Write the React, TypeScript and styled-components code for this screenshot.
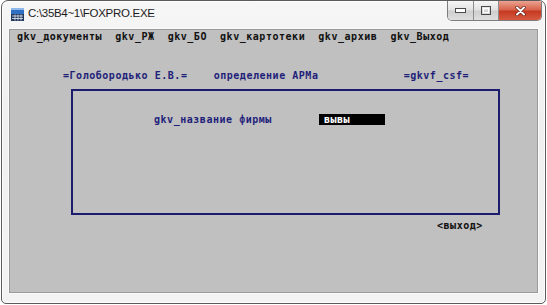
import { createGlobalStyle, styled } from "styled-components";

const GlobalStyle = createGlobalStyle`
  html, body {
    margin: 0;
    padding: 0;
    background: #ffffff;
  }
`;

const Window = styled.div`
  box-sizing: border-box;
  margin-left: 1px;
  width: 545px;
  height: 304px;
  border: 1px solid #5b5b5b;
  border-radius: 7px 7px 5px 5px;
  background: linear-gradient(180deg, #f6f6f6 0%, #efefef 40%, #f3f3f3 100%);
  box-shadow: inset 0 0 0 1px #fdfdfd;
  display: flex;
  flex-direction: column;
  overflow: hidden;
`;

const TitleBar = styled.div`
  height: 28px;
  display: flex;
  align-items: flex-start;
  flex-shrink: 0;
`;

const TitleIcon = styled.svg`
  margin: 7px 0 0 9px;
  flex-shrink: 0;
`;

const TitleText = styled.span`
  margin: 6px 0 0 4px;
  font-family: "Liberation Sans", Arial, sans-serif;
  font-size: 11.5px;
  letter-spacing: -0.3px;
  color: #1c1c1c;
  flex: 1;
`;

const CaptionGroup = styled.div`
  display: flex;
  margin-right: 3px;
  height: 19px;
  border: 1px solid #7d7d7d;
  border-top: none;
  border-radius: 0 0 5px 5px;
  overflow: hidden;
`;

const CaptionButton = styled.div<{ $w: number; $danger?: boolean }>`
  width: ${(p) => p.$w}px;
  display: flex;
  align-items: center;
  justify-content: center;
  background: ${(p) =>
    p.$danger
      ? "linear-gradient(180deg, #eba392 0%, #d8644c 45%, #c63a22 55%, #d65a40 100%)"
      : "linear-gradient(180deg, #f6f6f6 0%, #e2e2e2 45%, #cfcfcf 55%, #dedede 100%)"};
  & + & {
    border-left: 1px solid #8c8c8c;
  }
`;

const Client = styled.div`
  margin: 0 7px 10px 7px;
  flex: 1;
  border: 1px solid #9a9a9a;
  box-shadow: 0 0 0 1px #fafafa;
  background: #c0c0c0;
  font-family: "DejaVu Sans Mono", "Liberation Mono", monospace;
  font-weight: bold;
  font-size: 10px;
  letter-spacing: 0.53px;
  white-space: pre;
  display: flex;
  flex-direction: column;
  align-items: flex-start;
`;

const MenuBar = styled.div`
  height: 13px;
  line-height: 13px;
  padding-left: 7px;
  color: #111111;
`;

const Header = styled.div`
  margin: 26px 0 0 53px;
  height: 14px;
  line-height: 14px;
  color: #1f1f7a;
`;

const Frame = styled.div`
  box-sizing: border-box;
  margin: 6px 0 0 61px;
  width: 429px;
  height: 126px;
  border: 2px solid #1c1c6e;
  padding: 22px 0 0 81px;
  display: flex;
  align-items: flex-start;
  align-self: flex-start;
`;

const FieldRow = styled.div`
  display: flex;
  align-items: center;
  height: 13px;
  line-height: 13px;
  color: #1f1f7a;
`;

const Field = styled.div`
  margin-left: 47px;
  width: 66px;
  height: 11px;
  line-height: 11px;
  background: #000000;
  color: #ffffff;
  padding-left: 5px;
  box-sizing: border-box;
`;

const ExitButton = styled.div`
  margin: 4px 0 0 427px;
  height: 14px;
  line-height: 14px;
  color: #111111;
`;

export default function App() {
  return (
    <>
      <GlobalStyle />
      <Window>
        <TitleBar>
          <TitleIcon width="13" height="13" viewBox="0 0 13 13">
            <rect x="0" y="0" width="13" height="6" fill="#2f6fc4" />
            <rect x="0" y="0" width="13" height="2" fill="#8fb8ea" />
            <rect x="0" y="6" width="13" height="7" fill="#233a5c" />
            <path d="M1 8h11M1 10.5h11M4 6.5v6M7 6.5v6M10 6.5v6" stroke="#dfe7f2" strokeWidth="0.8" />
          </TitleIcon>
          <TitleText>C:\35B4~1\FOXPRO.EXE</TitleText>
          <CaptionGroup>
            <CaptionButton $w={25}>
              <svg width="11" height="5" viewBox="0 0 11 5">
                <rect x="0.5" y="0.5" width="10" height="4" fill="#ffffff" stroke="#4a4a4a" />
              </svg>
            </CaptionButton>
            <CaptionButton $w={24}>
              <svg width="10" height="9" viewBox="0 0 10 9">
                <rect x="0.5" y="0.5" width="9" height="8" fill="none" stroke="#4a4a4a" />
                <rect x="2.5" y="2.5" width="5" height="4" fill="none" stroke="#ffffff" />
              </svg>
            </CaptionButton>
            <CaptionButton $w={42} $danger>
              <svg width="11" height="10" viewBox="0 0 11 10">
                <path d="M2 1.5l7 7M9 1.5l-7 7" stroke="#5a1a10" strokeWidth="3.2" strokeLinecap="round" />
                <path d="M2 1.5l7 7M9 1.5l-7 7" stroke="#ffffff" strokeWidth="2" strokeLinecap="round" />
              </svg>
            </CaptionButton>
          </CaptionGroup>
        </TitleBar>
        <Client>
          <MenuBar>gkv_документы  gkv_РЖ  gkv_БО  gkv_картотеки  gkv_архив  gkv_Выход</MenuBar>
          <Header>=Голобородько Е.В.=    определение АРМа             =gkvf_csf=</Header>
          <Frame>
            <FieldRow>
              gkv_название фирмы
              <Field>вывы</Field>
            </FieldRow>
          </Frame>
          <ExitButton>&lt;выход&gt;</ExitButton>
        </Client>
      </Window>
    </>
  );
}
